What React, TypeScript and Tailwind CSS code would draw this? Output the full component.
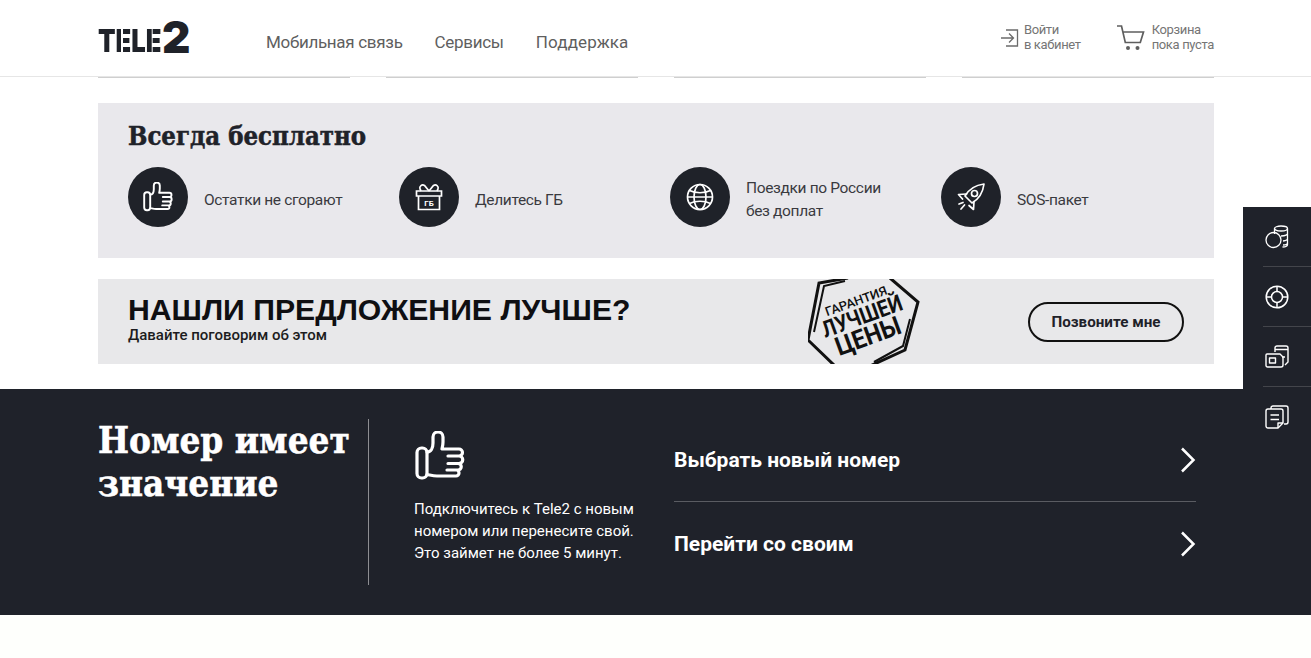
const sans = "font-['Roboto','Liberation_Sans',sans-serif]";
const slab = "font-['DejaVu_Serif_Condensed','DejaVu_Serif',serif] [-webkit-text-stroke:0.5px_currentColor]";

const ThumbIcon = ({ className }: { className: string }) => (
  <svg viewBox="0 0 50 50" fill="none" stroke="currentColor" strokeWidth="3.200" strokeLinejoin="round" strokeLinecap="round" className={className}>
    <rect x="2" y="17" width="10" height="30" rx="4.500" />
    <path d="M12 21c4 0 6-4 6-9V6a5 5 0 0 1 10 0v5c0 3-.5 5-1 7h17a3.500 3.500 0 0 1 0 7H33h11a3.500 3.500 0 0 1 0 7.500H33h10a3.200 3.200 0 0 1 0 6.500H32h9a3 3 0 0 1 0 6H22c-4 0-7-1-10-1.500" />
  </svg>
);

const GiftIcon = () => (
  <svg viewBox="0 0 28 28" fill="none" stroke="currentColor" strokeWidth="1.700" className="h-7 w-7">
    <path d="M1.500 8h25v5h-25zM3.500 13v13.500h21V13" />
    <path d="M14 8 9.500 2.500C7 1 4 3 5 6l1 2M14 8l4.500-5.500C21 1 24 3 23 6l-1 2" />
    <text x="14" y="23" textAnchor="middle" fontSize="8" fontWeight="700" fill="currentColor" stroke="none" fontFamily="Roboto, sans-serif">ГБ</text>
  </svg>
);

const GlobeIcon = () => (
  <svg viewBox="0 0 28 28" fill="none" stroke="currentColor" strokeWidth="1.700" className="h-7 w-7">
    <circle cx="14" cy="14" r="12.500" />
    <ellipse cx="14" cy="14" rx="6" ry="12.500" />
    <path d="M3.500 7.500c6 3 15 3 21 0M3.500 20.500c6-3 15-3 21 0M1.500 14h25" />
  </svg>
);

const RocketIcon = () => (
  <svg viewBox="0 0 30 30" fill="none" stroke="currentColor" strokeWidth="1.700" strokeLinejoin="round" strokeLinecap="round" className="h-[30px] w-[30px]">
    <path d="M9 14C13 7 20 3 28 2c-1 8-5 15-12 19l-7-7Z" />
    <circle cx="18.500" cy="11.500" r="3" />
    <path d="M10.500 12 2.500 12.500l4 4.500M18 19.500l-.5 8-4.500-4M7 20.500l-4 1.500M8.500 23 5 27" />
  </svg>
);

const LoginIcon = () => (
  <svg viewBox="0 0 18 18" fill="none" stroke="#6b6b6b" strokeWidth="1.300" className="h-[18px] w-[18px]">
    <path d="M5 1h11.500v16H5M0 9h12M8 4.500 12.500 9 8 13.500" />
  </svg>
);

const CartIcon = () => (
  <svg viewBox="0 0 28 26" fill="none" stroke="#5f5f5f" strokeWidth="1.700" className="h-[26px] w-[28px]">
    <path d="M0 1h4.500l3.800 16.500h15L26.500 7H5.500" />
    <circle cx="11" cy="23" r="2" fill="#5f5f5f" stroke="none" />
    <circle cx="20.500" cy="23" r="2" fill="#5f5f5f" stroke="none" />
  </svg>
);

const CoinsIcon = () => (
  <svg viewBox="0 0 24 24" fill="none" stroke="currentColor" strokeWidth="1.300" className="h-6 w-6">
    <ellipse cx="16" cy="3.500" rx="6.500" ry="2.500" />
    <path d="M9.500 3.500V9M22.500 3.500v16c0 1.500-2.500 2.500-5 2.500M22.500 8.500c0 1-2 2.500-6.500 2.500M22.500 13.500c0 1-1.500 2.200-4.500 2.500M22.500 18c0 1-1.500 2-4.500 2" />
    <circle cx="8.500" cy="15" r="7.500" />
  </svg>
);

const RingIcon = () => (
  <svg viewBox="0 0 24 24" fill="none" stroke="currentColor" strokeWidth="1.500" className="h-6 w-6">
    <circle cx="12" cy="12" r="10.800" />
    <circle cx="12" cy="12" r="5.500" />
    <path d="M12 1.200v5.300M12 17.500v5.300M1.200 12h5.300M17.500 12h5.300" />
  </svg>
);

const SimIcon = () => (
  <svg viewBox="0 0 24 24" fill="none" stroke="currentColor" strokeWidth="1.400" strokeLinejoin="round" className="h-6 w-6">
    <path d="M10 7V3a2 2 0 0 1 2-2h9a2 2 0 0 1 2 2v14l-3 3M10 4.500h13M20 12h-3" />
    <path d="M2 9h13l3 3v8a2 2 0 0 1-2 2H2.500A1.500 1.500 0 0 1 1 20.500V10a1 1 0 0 1 1-1Z" />
    <rect x="4.500" y="13" width="6" height="5" />
  </svg>
);

const DocsIcon = () => (
  <svg viewBox="0 0 24 24" fill="none" stroke="currentColor" strokeWidth="1.400" strokeLinejoin="round" className="h-6 w-6">
    <path d="M6 4V3a2 2 0 0 1 2-2h13a2 2 0 0 1 2 2v14a2 2 0 0 1-2 2h-2" />
    <path d="M3 4h13a2 2 0 0 1 2 2v12l-5 5H3a2 2 0 0 1-2-2V6a2 2 0 0 1 2-2Z" />
    <path d="M13 23v-5h5M5.500 10H14M5.500 14.500H14" />
  </svg>
);

const GuaranteeBadge = () => (
  <svg viewBox="0 0 114 85" className="h-[85px] w-[114px]" fill="none">
    <path d="M40-1 11 4 0 61l27 26M82-1l28 24-13 48-35 16" stroke="#111" strokeWidth="3" />
    <path d="M37 2 16 7 6 53M102 40l-7 27-29 16" stroke="#111" strokeWidth="2" />
    <g fontFamily="Roboto, sans-serif" fill="#111" textAnchor="middle" fontWeight="700">
      <text transform="translate(48 22) rotate(-20)" y="4.500" fontSize="12.500" fontWeight="500" textLength="65" lengthAdjust="spacingAndGlyphs">ГАРАНТИЯ</text>
      <text transform="translate(54 37) rotate(-20)" y="8" fontSize="23" textLength="84" lengthAdjust="spacingAndGlyphs">ЛУЧШЕЙ</text>
      <text transform="translate(60 57) rotate(-20)" y="9" fontSize="26" textLength="68" lengthAdjust="spacingAndGlyphs">ЦЕНЫ</text>
    </g>
  </svg>
);

const Chevron = () => (
  <svg viewBox="0 0 16 26" fill="none" stroke="#fff" strokeWidth="2.500" className="h-[26px] w-4">
    <path d="m2 1.500 11.500 11.500L2 24.500" />
  </svg>
);

const Logo = () => (
  <div className="flex h-[34px] w-[168px] items-end font-['Inter',sans-serif] font-black leading-none text-[#1f2229]">
    <span className="inline-block w-[64px] origin-left scale-x-[0.8] whitespace-nowrap text-[32px] leading-[28px]">
      T
      <span className="bg-[linear-gradient(90deg,#1f2229_0_36%,transparent_36%_46%,#1f2229_46%)] bg-clip-text text-transparent">E</span>
      L
      <span className="bg-[linear-gradient(90deg,#1f2229_0_36%,transparent_36%_46%,#1f2229_46%)] bg-clip-text text-transparent">E</span>
    </span>
    <span className="text-[44px] leading-[36px] tracking-[-1px]">2</span>
  </div>
);

const perks = [
  { icon: <ThumbIcon className="h-[30px] w-[30px]" />, text: ["Остатки не сгорают"] },
  { icon: <GiftIcon />, text: ["Делитесь ГБ"] },
  { icon: <GlobeIcon />, text: ["Поездки по России", "без доплат"] },
  { icon: <RocketIcon />, text: ["SOS-пакет"] },
];

const sideIcons = [<CoinsIcon />, <RingIcon />, <SimIcon />, <DocsIcon />];

export default function App() {
  return (
    <div className={`relative h-[658px] w-full overflow-hidden bg-white ${sans}`}>
      <header className="h-[77px] border-b border-[#e6e6e6]">
        <div className="ml-[98px] flex h-full w-[1116px] items-center">
          <Logo />
          <nav className="flex gap-8 pt-[10px] text-[17px] tracking-[-0.3px] text-[#5f5f5f]">
            <span>Мобильная связь</span>
            <span>Сервисы</span>
            <span className="tracking-[0.1px]">Поддержка</span>
          </nav>
          <div className="ml-auto flex items-center text-[13px] leading-[15px] tracking-[-0.35px] text-[#757575]">
            <LoginIcon />
            <div className="-mt-[2px] ml-[5px]">
              <div>Войти</div>
              <div>в кабинет</div>
            </div>
            <div className="ml-[36px]">
              <CartIcon />
            </div>
            <div className="-mt-[3px] ml-[7px]">
              <div>Корзина</div>
              <div>пока пуста</div>
            </div>
          </div>
        </div>
      </header>

      <div className="ml-[98px] grid w-[1116px] grid-cols-4 gap-9">
        <div className="h-px bg-[#cfcfcf]" />
        <div className="h-px bg-[#cfcfcf]" />
        <div className="h-px bg-[#cfcfcf]" />
        <div className="h-px bg-[#cfcfcf]" />
      </div>

      <section className="ml-[98px] mt-[25px] h-[155px] w-[1116px] bg-[#e9e8ec] pl-[30px] pt-[17px]">
        <h2 className={`${slab} text-[25.500px] font-bold leading-[32px] text-[#1f2229]`}>Всегда бесплатно</h2>
        <div className="mt-[15px] grid grid-cols-[271px_271px_271px_1fr]">
          {perks.map((perk) => (
            <div key={perk.text[0]} className="flex items-center gap-4">
              <div className="flex h-[60px] w-[60px] items-center justify-center rounded-full bg-[#1f2229] text-white">
                {perk.icon}
              </div>
              <div className="mt-[6px] text-[15.500px] leading-[23px] tracking-[-0.35px] text-[#3a3a3f]">
                {perk.text.map((line) => (
                  <div key={line}>{line}</div>
                ))}
              </div>
            </div>
          ))}
        </div>
      </section>

      <section className="relative ml-[98px] mt-[21px] flex h-[85px] w-[1116px] items-center overflow-hidden bg-[#e8e8ea] px-[30px]">
        <div className="-mt-[6px]">
          <div className="font-['Liberation_Sans',sans-serif] text-[30.200px] font-bold leading-[34px] text-[#0f0f12]">НАШЛИ ПРЕДЛОЖЕНИЕ ЛУЧШЕ?</div>
          <div className="-mt-[1px] text-[15px] font-medium leading-[18px] text-[#1c1c20]">Давайте поговорим об этом</div>
        </div>
        <div className="absolute left-[710px] top-0">
          <GuaranteeBadge />
        </div>
        <button className="ml-auto flex h-10 w-[156px] items-center justify-center rounded-full border-2 border-[#111] pt-[2px] text-[15.200px] font-bold text-[#1f2229]">
          Позвоните мне
        </button>
      </section>

      <section className="mt-[25px] h-[226px] bg-[#1f222a] pl-[98px] pr-[115px] pt-[30px] text-white">
        <div className="flex">
          <div className={`h-[166px] w-[271px] border-r border-[#8d8e92] ${slab} text-[36.500px] font-bold leading-[43px]`}>
            Номер имеет
            <br />
            значение
          </div>
          <div className="ml-[45px] w-[260px]">
            <ThumbIcon className="ml-[1px] mt-[12px] h-[50px] w-[50px]" />
            <p className="mt-[17px] text-[15px] leading-[22px]">
              Подключитесь к Tele2 с новым
              <br />
              номером или перенесите свой.
              <br />
              Это займет не более 5 минут.
            </p>
          </div>
          <div className="flex-1">
            <div className="flex h-[83px] items-center justify-between border-b border-[#5a5c62] text-[21px] font-bold">
              <span className="pt-[2px]">Выбрать новый номер</span>
              <Chevron />
            </div>
            <div className="flex h-[84px] items-center justify-between text-[21px] font-bold">
              <span className="pt-[2px]">Перейти со своим</span>
              <Chevron />
            </div>
          </div>
        </div>
      </section>

      <div className="h-[43px] bg-[#fefffc]" />

      <aside className="absolute right-0 top-[207px] w-[68px] bg-[#1f222a] text-white">
        {sideIcons.map((icon, i) => (
          <div key={i} className="flex h-[60px] items-center pl-[22px]">
            {icon}
          </div>
        ))}
        <div className="absolute left-5 right-0 top-[59px] h-px bg-[#43454b]" />
        <div className="absolute left-5 right-0 top-[119px] h-px bg-[#43454b]" />
        <div className="absolute left-5 right-0 top-[179px] h-px bg-[#43454b]" />
      </aside>
    </div>
  );
}
